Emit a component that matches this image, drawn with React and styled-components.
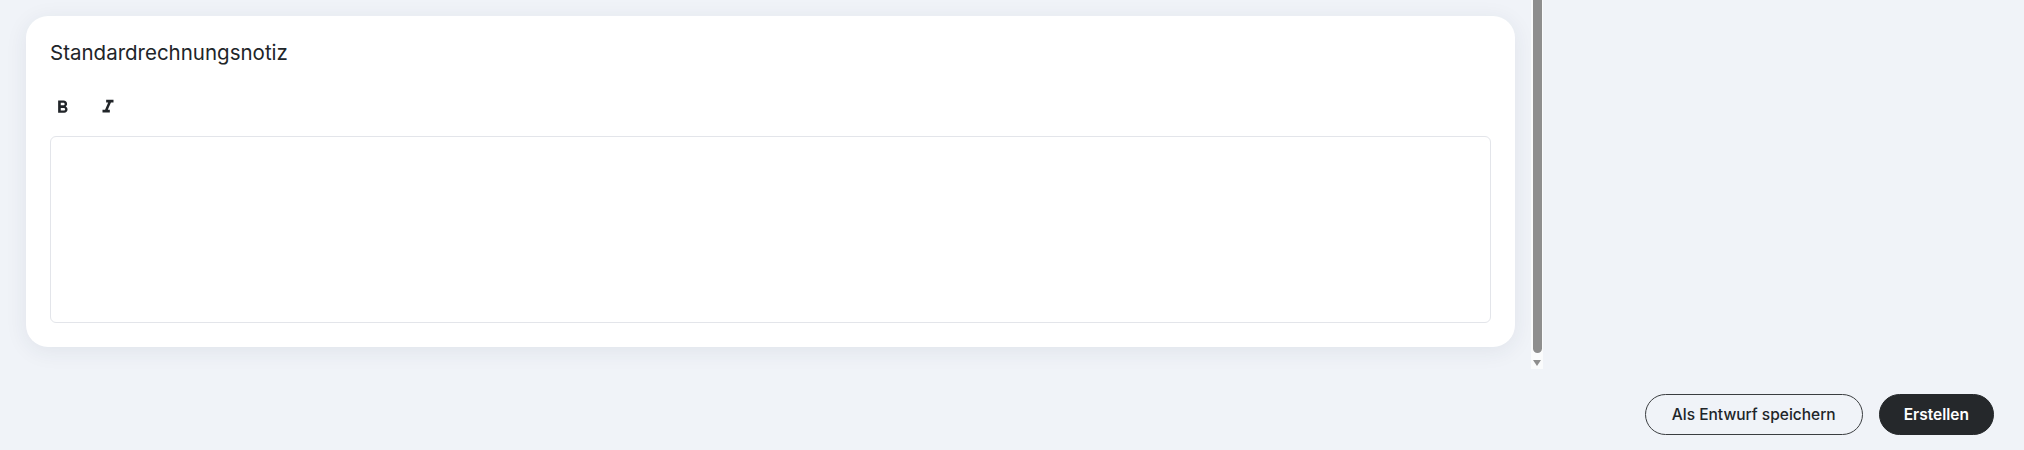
import styled, { createGlobalStyle } from "styled-components";
import { MdFormatBold, MdFormatItalic } from "react-icons/md";

const GlobalStyle = createGlobalStyle`
  body {
    margin: 0;
    background: #f0f3f8;
    font-family: Inter, "Noto Sans", sans-serif;
    color: #212529;
  }
`;

const Page = styled.div`
  display: flex;
  flex-direction: column;
  height: 450px;
  overflow: hidden;
`;

const Main = styled.div`
  display: flex;
  height: 369px;
`;

const ScrollArea = styled.div`
  width: 1531px;
  padding: 16px 16px 0 26px;
  box-sizing: border-box;
  overflow: hidden;
`;

const Scrollbar = styled.div`
  width: 12px;
  background: #fafbfc;
  display: flex;
  flex-direction: column;
  align-items: center;
  padding-bottom: 3px;
  box-sizing: border-box;
`;

const Thumb = styled.div`
  flex: 1;
  width: 9px;
  margin-left: 1px;
  background: #8e8e8e;
  border-radius: 0 0 5px 5px;
`;

const Arrow = styled.div`
  margin-top: 7px;
  width: 0;
  height: 0;
  border-left: 4px solid transparent;
  border-right: 4px solid transparent;
  border-top: 6px solid #8e8e8e;
`;

const Card = styled.section`
  background: #fff;
  border-radius: 22px;
  box-shadow: 0 4px 22px rgba(40, 50, 80, 0.08);
  padding: 24px 24px 24px;
  display: flex;
  flex-direction: column;
`;

const Title = styled.h2`
  margin: 0;
  font-size: 20.5px;
  font-weight: 400;
  line-height: 26px;
  color: #212529;
`;

const Toolbar = styled.div`
  display: flex;
  gap: 22px;
  margin: 25px 0 13px;
`;

const ToolButton = styled.button`
  width: 24px;
  height: 32px;
  display: flex;
  align-items: center;
  justify-content: center;
  border: none;
  background: transparent;
  color: #212529;
  padding: 0;
  cursor: pointer;
`;

const Editor = styled.div`
  height: 187px;
  border: 1px solid #e3e5ea;
  border-radius: 6px;
  box-sizing: border-box;
  outline: none;
`;

const Footer = styled.div`
  display: flex;
  justify-content: flex-end;
  gap: 16px;
  padding: 25px 30px 0 0;
`;

const Button = styled.button`
  height: 41px;
  padding: 0 ${(p) => (p.$primary ? "24px" : "26px")};
  border-radius: 999px;
  font-family: Inter, "Noto Sans", sans-serif;
  font-size: 15.5px;
  font-weight: ${(p) => (p.$primary ? 600 : 500)};
  border: 1px solid ${(p) => (p.$primary ? "#25282b" : "#3a3d40")};
  background: ${(p) => (p.$primary ? "#25282b" : "transparent")};
  color: ${(p) => (p.$primary ? "#fff" : "#212529")};
  cursor: pointer;
`;

export default function App() {
  return (
    <>
      <GlobalStyle />
      <Page>
        <Main>
          <ScrollArea>
            <Card>
              <Title>Standardrechnungsnotiz</Title>
              <Toolbar>
                <ToolButton title="Fett">
                  <MdFormatBold size={21} />
                </ToolButton>
                <ToolButton title="Kursiv">
                  <MdFormatItalic size={22} />
                </ToolButton>
              </Toolbar>
              <Editor contentEditable suppressContentEditableWarning />
            </Card>
          </ScrollArea>
          <Scrollbar>
            <Thumb />
            <Arrow />
          </Scrollbar>
        </Main>
        <Footer>
          <Button>Als Entwurf speichern</Button>
          <Button $primary>Erstellen</Button>
        </Footer>
      </Page>
    </>
  );
}
